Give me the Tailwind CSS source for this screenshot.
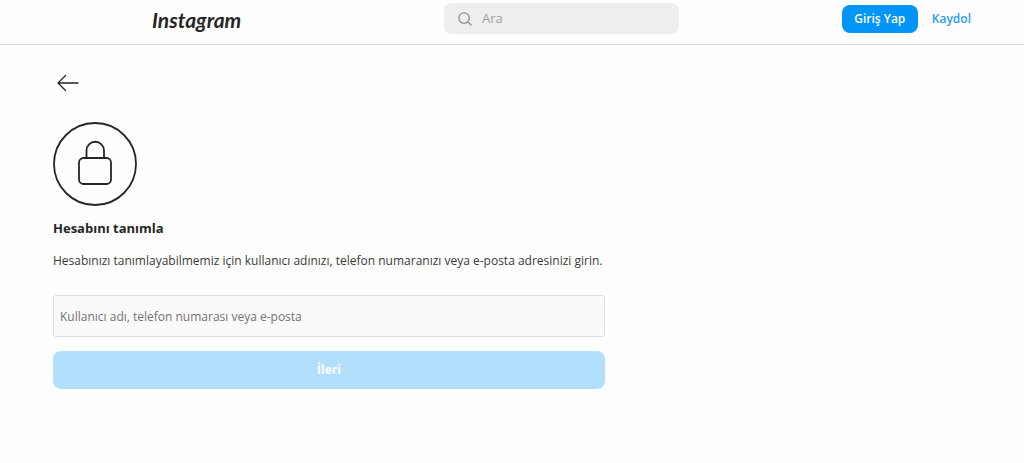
<!DOCTYPE html>
<html lang="tr">
<head>
<meta charset="utf-8">
<meta name="viewport" content="width=device-width, initial-scale=1">
<title>Instagram</title>
<script src="https://cdn.jsdelivr.net/npm/@tailwindcss/browser@4"></script>
</head>
<body class="min-h-screen bg-[#fefefe] font-['Open_Sans','Noto_Sans',sans-serif] text-xs text-[#262626]">
<header class="border-b border-[#dbdbdb] bg-[#fefefe]">
  <div class="grid grid-cols-[1fr_235px_1fr] items-start pt-[3px] pb-[9px] pl-[152px] pr-[53px]">
    <a href="#" class="justify-self-start pt-[2px] font-['Lato',cursive] text-[21px] leading-[30px] font-bold italic">Instagram</a>
    <label class="flex h-[31px] items-center gap-2.5 rounded-lg bg-[#eeeeee] px-3.5 text-[#8e8e8e]">
      <svg class="size-[14px] shrink-0" viewBox="0 0 15 15" fill="none" stroke="currentColor" stroke-width="1.4" stroke-linecap="round" aria-hidden="true"><circle cx="6.5" cy="6.5" r="5.6"/><path d="M10.6 10.6 14 14"/></svg>
      <input type="search" aria-label="Ara" placeholder="Ara" class="min-w-0 flex-1 bg-transparent text-[13px] outline-none placeholder:text-[#a0a0a0]">
    </label>
    <nav class="flex items-center gap-3.5 justify-self-end pt-[2px] font-semibold">
      <button type="button" class="h-7 w-[76px] rounded-lg bg-[#0095f6] text-white">Giriş Yap</button>
      <a href="#" class="text-[#2f9bf5]">Kaydol</a>
    </nav>
  </div>
</header>
<main class="max-w-[605px] pt-[27px] pl-[53px]">
  <a href="#" aria-label="Geri" class="ml-1 block w-[22px]">
    <svg class="h-[22px] w-[22px]" viewBox="0 0 22 22" fill="none" stroke="currentColor" stroke-width="1.3" stroke-linecap="round" stroke-linejoin="round" aria-hidden="true"><path d="M21 11H1M8.500 3.500 1 11l7.500 7.500"/></svg>
  </a>
  <svg class="mt-7 size-[84px]" viewBox="0 0 84 84" fill="none" stroke="currentColor" stroke-width="1.8" aria-hidden="true">
    <circle cx="42" cy="42" r="41"/>
    <rect x="26" y="36" width="32" height="26" rx="4.500"/>
    <path d="M33.500 36v-7.500a8.750 8.750 0 0 1 17.500 0V36"/>
  </svg>
  <h1 class="mt-3 text-[13px] leading-5 font-bold">Hesabını tanımla</h1>
  <p class="mt-[13px] leading-5 text-[#3a3a3a]">Hesabınızı tanımlayabilmemiz için kullanıcı adınızı, telefon numaranızı veya e-posta adresinizi girin.</p>
  <form class="mt-6">
    <input type="text" aria-label="Kullanıcı adı, telefon numarası veya e-posta" placeholder="Kullanıcı adı, telefon numarası veya e-posta" class="block h-[42px] w-full rounded-[3px] border border-[#dfdfdf] bg-[#fafafa] px-1.5 outline-none placeholder:text-[#737373]">
    <button type="button" class="mt-3.5 block h-[38px] w-full rounded-lg bg-[#b2dffc] font-bold text-white">İleri</button>
  </form>
</main>
</body>
</html>
